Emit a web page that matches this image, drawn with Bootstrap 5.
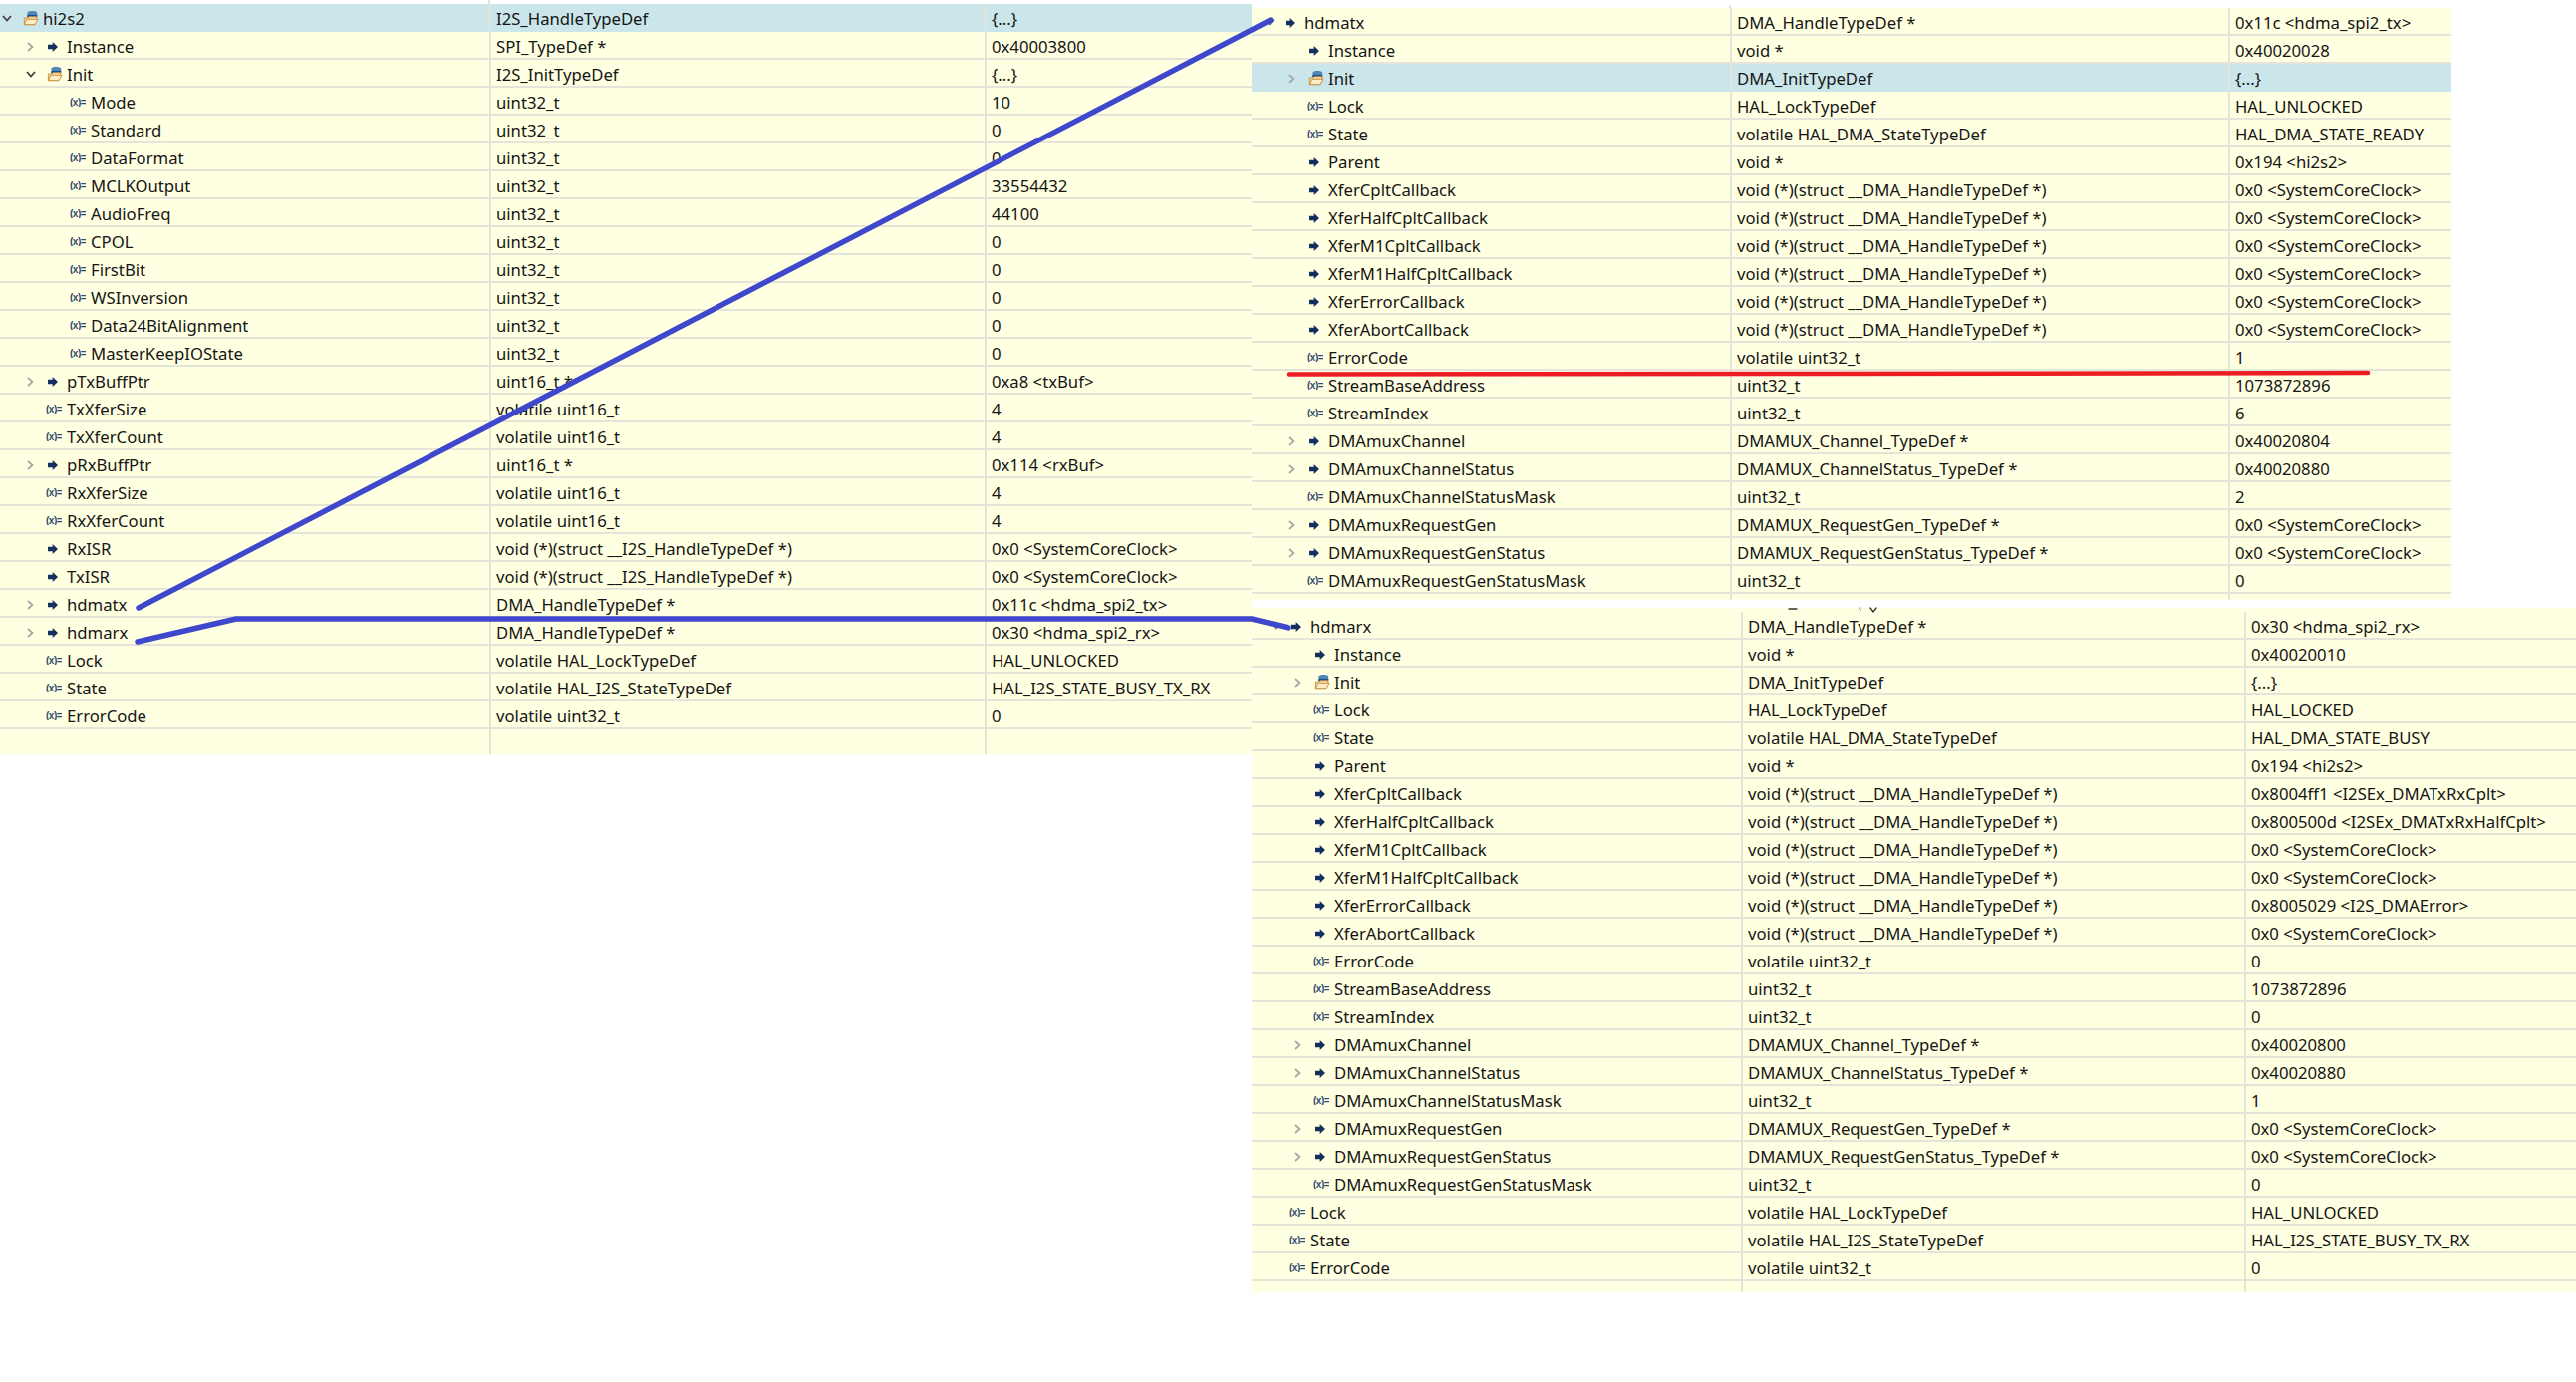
<!DOCTYPE html>
<html lang="en">
<head>
  <meta charset="UTF-8">
  <title>Expressions</title>
  <link href="https://cdn.jsdelivr.net/npm/bootstrap@5.3.0/dist/css/bootstrap.min.css" rel="stylesheet">
  <style>
    body {
      background-color: #fff;
      margin: 0;
      height: 1387px;
      overflow: hidden;
      position: relative;
    }

    .canvas-row { width: 2585px; }

    .left-side { width: 1256px; padding-top: 4px; }
    .right-side { width: 1329px; }

    .panel-top { width: 1204px; margin-top: 8px; }
    .panel-bottom { margin-top: 8px; padding-top: 4px; }

    .var-panel {
      background-color: #ffffe1;
      font-family: "Noto Sans", "Open Sans", sans-serif;
      font-size: 16.7px;
      color: #151515;
    }

    .var-row {
      display: grid;
      grid-auto-rows: 26px;
      height: 28px;
      line-height: 29px;
      border-bottom: 2px solid #e4e4d8;
      white-space: nowrap;
    }

    .var-row.selected { background-color: #cbe6ea; border-bottom-color: #cbe6ea; }

    .var-filler { border: 0; line-height: 0; grid-auto-rows: 100%; }

    .grid-left { grid-template-columns: 491px 497px 1fr; }
    .grid-top { grid-template-columns: 480px 500px 1fr; }
    .grid-bottom { grid-template-columns: 491px 505px 1fr; }

    .var-cell {
      padding-left: 5px;
      border-left: 2px solid #e4e4d8;
      overflow: hidden;
    }

    .var-cell:first-child {
      border-left: 0;
      padding-left: 0;
      position: relative;
      overflow: visible;
    }

    .var-name { position: absolute; top: 0; }

    .tw, .ic { position: absolute; top: 0; }

    .overlay-lines {
      position: absolute;
      left: 0;
      top: 0;
      pointer-events: none;
    }
  </style>
</head>
<body>
  <svg width="0" height="0" class="d-block">
    <defs>
      <symbol id="i-arrow" viewBox="0 0 16 16"><path d="M0 4.5H7.5V0L16 8 7.5 16V11.5H0z" fill="#14305e"/></symbol>
      <symbol id="i-var" viewBox="0 0 16 9"><text x="0" y="8" font-size="10" font-weight="700" letter-spacing="-0.5" font-family="Liberation Sans, sans-serif" fill="#2f4a70">(x)=</text></symbol>
      <symbol id="i-struct" viewBox="0 0 18 18">
        <path d="M5 3C5 .5 16 .5 16 3V9H5z" fill="#4f87b8"/>
        <path d="M5 5.5H16V8H5z" fill="#1f4f88"/>
        <path d="M1.5 9H5.5L6.8 7.5H15.5V10L13.5 16.5H1.5z" fill="#f7d9a0" stroke="#c78b3a"/>
        <path d="M1.5 16.5 4.5 10.5H17L13.5 16.5z" fill="#fdeec8" stroke="#c78b3a"/>
      </symbol>
    </defs>
  </svg>

  <div class="d-flex canvas-row align-items-start">
    <div class="left-side">
      <div class="var-panel" id="panelLeft"></div>
    </div>
    <div class="right-side d-flex flex-column">
      <div class="var-panel panel-top" id="panelTop"></div>
      <div class="var-panel panel-bottom" id="panelBottom"></div>
    </div>
  </div>

  <svg class="overlay-lines" width="2585" height="1387" fill="none" stroke-linecap="round" stroke-linejoin="round">
    <path d="M491 0V4M1736 6V8" stroke="#e4e4d8" stroke-width="2"/>
    <path d="M1795 611H1803M1866 610l1 2M1877 610l3 4 3-4" stroke="#333" stroke-width="1.3"/>
    <path d="M139 610 1275 20" stroke="#3f48cc" stroke-width="5.5"/>
    <path d="M138 644 237 621H1256L1293 630" stroke="#3f48cc" stroke-width="5.5"/>
    <path d="M1293 375.5 1835 375 2376 374" stroke="#ed1c24" stroke-width="4.5"/>
  </svg>

  <script>
    // row: [level, kind, twisty, name, type, value]  kind a=arrow v=variable s=struct
    const svc = '0x0 <SystemCoreClock>';
    const dmaCb = 'void (*)(struct __DMA_HandleTypeDef *)';

    const leftRows = [
      [0, 's', 'o', 'hi2s2', 'I2S_HandleTypeDef', '{...}', 1],
      [1, 'a', 'c', 'Instance', 'SPI_TypeDef *', '0x40003800'],
      [1, 's', 'o', 'Init', 'I2S_InitTypeDef', '{...}'],
      [2, 'v', '', 'Mode', 'uint32_t', '10'],
      [2, 'v', '', 'Standard', 'uint32_t', '0'],
      [2, 'v', '', 'DataFormat', 'uint32_t', '0'],
      [2, 'v', '', 'MCLKOutput', 'uint32_t', '33554432'],
      [2, 'v', '', 'AudioFreq', 'uint32_t', '44100'],
      [2, 'v', '', 'CPOL', 'uint32_t', '0'],
      [2, 'v', '', 'FirstBit', 'uint32_t', '0'],
      [2, 'v', '', 'WSInversion', 'uint32_t', '0'],
      [2, 'v', '', 'Data24BitAlignment', 'uint32_t', '0'],
      [2, 'v', '', 'MasterKeepIOState', 'uint32_t', '0'],
      [1, 'a', 'c', 'pTxBuffPtr', 'uint16_t *', '0xa8 <txBuf>'],
      [1, 'v', '', 'TxXferSize', 'volatile uint16_t', '4'],
      [1, 'v', '', 'TxXferCount', 'volatile uint16_t', '4'],
      [1, 'a', 'c', 'pRxBuffPtr', 'uint16_t *', '0x114 <rxBuf>'],
      [1, 'v', '', 'RxXferSize', 'volatile uint16_t', '4'],
      [1, 'v', '', 'RxXferCount', 'volatile uint16_t', '4'],
      [1, 'a', '', 'RxISR', 'void (*)(struct __I2S_HandleTypeDef *)', svc],
      [1, 'a', '', 'TxISR', 'void (*)(struct __I2S_HandleTypeDef *)', svc],
      [1, 'a', 'c', 'hdmatx', 'DMA_HandleTypeDef *', '0x11c <hdma_spi2_tx>'],
      [1, 'a', 'c', 'hdmarx', 'DMA_HandleTypeDef *', '0x30 <hdma_spi2_rx>'],
      [1, 'v', '', 'Lock', 'volatile HAL_LockTypeDef', 'HAL_UNLOCKED'],
      [1, 'v', '', 'State', 'volatile HAL_I2S_StateTypeDef', 'HAL_I2S_STATE_BUSY_TX_RX'],
      [1, 'v', '', 'ErrorCode', 'volatile uint32_t', '0']
    ];

    const topRows = [
      [0, 'a', 'g', 'hdmatx', 'DMA_HandleTypeDef *', '0x11c <hdma_spi2_tx>'],
      [1, 'a', '', 'Instance', 'void *', '0x40020028'],
      [1, 's', 'c', 'Init', 'DMA_InitTypeDef', '{...}', 1],
      [1, 'v', '', 'Lock', 'HAL_LockTypeDef', 'HAL_UNLOCKED'],
      [1, 'v', '', 'State', 'volatile HAL_DMA_StateTypeDef', 'HAL_DMA_STATE_READY'],
      [1, 'a', '', 'Parent', 'void *', '0x194 <hi2s2>'],
      [1, 'a', '', 'XferCpltCallback', dmaCb, svc],
      [1, 'a', '', 'XferHalfCpltCallback', dmaCb, svc],
      [1, 'a', '', 'XferM1CpltCallback', dmaCb, svc],
      [1, 'a', '', 'XferM1HalfCpltCallback', dmaCb, svc],
      [1, 'a', '', 'XferErrorCallback', dmaCb, svc],
      [1, 'a', '', 'XferAbortCallback', dmaCb, svc],
      [1, 'v', '', 'ErrorCode', 'volatile uint32_t', '1'],
      [1, 'v', '', 'StreamBaseAddress', 'uint32_t', '1073872896'],
      [1, 'v', '', 'StreamIndex', 'uint32_t', '6'],
      [1, 'a', 'c', 'DMAmuxChannel', 'DMAMUX_Channel_TypeDef *', '0x40020804'],
      [1, 'a', 'c', 'DMAmuxChannelStatus', 'DMAMUX_ChannelStatus_TypeDef *', '0x40020880'],
      [1, 'v', '', 'DMAmuxChannelStatusMask', 'uint32_t', '2'],
      [1, 'a', 'c', 'DMAmuxRequestGen', 'DMAMUX_RequestGen_TypeDef *', svc],
      [1, 'a', 'c', 'DMAmuxRequestGenStatus', 'DMAMUX_RequestGenStatus_TypeDef *', svc],
      [1, 'v', '', 'DMAmuxRequestGenStatusMask', 'uint32_t', '0']
    ];

    const bottomRows = [
      [0, 'a', 'g', 'hdmarx', 'DMA_HandleTypeDef *', '0x30 <hdma_spi2_rx>'],
      [1, 'a', '', 'Instance', 'void *', '0x40020010'],
      [1, 's', 'c', 'Init', 'DMA_InitTypeDef', '{...}'],
      [1, 'v', '', 'Lock', 'HAL_LockTypeDef', 'HAL_LOCKED'],
      [1, 'v', '', 'State', 'volatile HAL_DMA_StateTypeDef', 'HAL_DMA_STATE_BUSY'],
      [1, 'a', '', 'Parent', 'void *', '0x194 <hi2s2>'],
      [1, 'a', '', 'XferCpltCallback', dmaCb, '0x8004ff1 <I2SEx_DMATxRxCplt>'],
      [1, 'a', '', 'XferHalfCpltCallback', dmaCb, '0x800500d <I2SEx_DMATxRxHalfCplt>'],
      [1, 'a', '', 'XferM1CpltCallback', dmaCb, svc],
      [1, 'a', '', 'XferM1HalfCpltCallback', dmaCb, svc],
      [1, 'a', '', 'XferErrorCallback', dmaCb, '0x8005029 <I2S_DMAError>'],
      [1, 'a', '', 'XferAbortCallback', dmaCb, svc],
      [1, 'v', '', 'ErrorCode', 'volatile uint32_t', '0'],
      [1, 'v', '', 'StreamBaseAddress', 'uint32_t', '1073872896'],
      [1, 'v', '', 'StreamIndex', 'uint32_t', '0'],
      [1, 'a', 'c', 'DMAmuxChannel', 'DMAMUX_Channel_TypeDef *', '0x40020800'],
      [1, 'a', 'c', 'DMAmuxChannelStatus', 'DMAMUX_ChannelStatus_TypeDef *', '0x40020880'],
      [1, 'v', '', 'DMAmuxChannelStatusMask', 'uint32_t', '1'],
      [1, 'a', 'c', 'DMAmuxRequestGen', 'DMAMUX_RequestGen_TypeDef *', svc],
      [1, 'a', 'c', 'DMAmuxRequestGenStatus', 'DMAMUX_RequestGenStatus_TypeDef *', svc],
      [1, 'v', '', 'DMAmuxRequestGenStatusMask', 'uint32_t', '0'],
      [0, 'v', '', 'Lock', 'volatile HAL_LockTypeDef', 'HAL_UNLOCKED'],
      [0, 'v', '', 'State', 'volatile HAL_I2S_StateTypeDef', 'HAL_I2S_STATE_BUSY_TX_RX'],
      [0, 'v', '', 'ErrorCode', 'volatile uint32_t', '0']
    ];

    function esc(s) {
      return s.replace(/&/g, '&amp;').replace(/</g, '&lt;');
    }

    // baseX = x of the level 0 name inside the panel
    function renderPanel(id, rows, gridClass, baseX, fillerHeight) {
      let html = '';
      rows.forEach(r => {
        const x = baseX + r[0] * 24;
        let icon = '';
        if (r[1] === 'a') icon = `<svg class="ic" width="10" height="10" style="left:${x - 19}px;top:10px"><use href="#i-arrow"/></svg>`;
        if (r[1] === 'v') icon = `<svg class="ic" width="16" height="9" style="left:${x - 21}px;top:10px"><use href="#i-var"/></svg>`;
        if (r[1] === 's') icon = `<svg class="ic" width="16" height="16" style="left:${x - 20}px;top:6px"><use href="#i-struct"/></svg>`;
        let twisty = '';
        if (r[2] === 'c') twisty = `<svg class="tw" width="7" height="10" style="left:${x - 40}px;top:10px"><path d="M1 1 5.5 5 1 9" fill="none" stroke="#a6a6a6" stroke-width="1.7"/></svg>`;
        if (r[2] === 'o') twisty = `<svg class="tw" width="10" height="7" style="left:${x - 41}px;top:11px"><path d="M1 1 5 5.5 9 1" fill="none" stroke="#3c3c3c" stroke-width="1.7"/></svg>`;
        if (r[2] === 'g') twisty = `<svg class="tw" width="10" height="7" style="left:${x - 40}px;top:11px"><path d="M1 1 5 5.5 9 1" fill="none" stroke="#777" stroke-width="1.7"/></svg>`;
        html += `<div class="var-row ${gridClass}${r[6] ? ' selected' : ''}">
          <div class="var-cell">${twisty}${icon}<span class="var-name" style="left:${x}px">${esc(r[3])}</span></div>
          <div class="var-cell">${esc(r[4])}</div>
          <div class="var-cell">${esc(r[5])}</div>
        </div>`;
      });
      html += `<div class="var-row var-filler ${gridClass}" style="height:${fillerHeight}px"><div class="var-cell"></div><div class="var-cell"></div><div class="var-cell"></div></div>`;
      document.getElementById(id).innerHTML = html;
    }

    renderPanel('panelLeft', leftRows, 'grid-left', 43, 25);
    renderPanel('panelTop', topRows, 'grid-top', 53, 6);
    renderPanel('panelBottom', bottomRows, 'grid-bottom', 59, 11);
  </script>
  <script src="https://cdn.jsdelivr.net/npm/bootstrap@5.3.0/dist/js/bootstrap.bundle.min.js"></script>
</body>
</html>
